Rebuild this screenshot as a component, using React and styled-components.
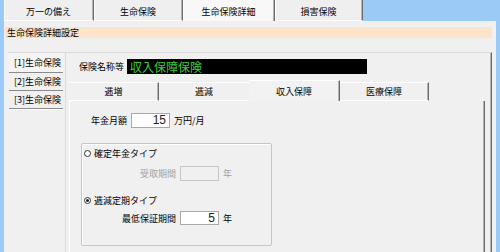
import React from 'react';
import styled, { createGlobalStyle } from 'styled-components';

const Global = createGlobalStyle`
  html, body { margin: 0; padding: 0; background: #9ccaf6; }
  body { font-family: "Noto Sans CJK JP", "Liberation Sans", sans-serif; }
`;

const Screen = styled.div`
  width: 500px;
  height: 252px;
  padding: 0 4px;
  box-sizing: border-box;
  display: flex;
  flex-direction: column;
  overflow: hidden;
  font-size: 9px;
  color: #000;
`;

const TopTabs = styled.div`
  display: flex;
  height: 21px;
  flex-shrink: 0;
`;

const TopTab = styled.div`
  width: ${(p) => p.$w}px;
  height: 21px;
  box-sizing: border-box;
  display: flex;
  align-items: center;
  justify-content: center;
  background: ${(p) => (p.$active ? '#f8f8f8' : '#efefef')};
  border-right: 1px solid #6a6a6a;
  box-shadow: inset 1px 0 0 #fff, inset -1px 0 0 #b4b4b4;
  border-bottom: ${(p) => (p.$active ? 'none' : '1px solid #fff')};
  padding-top: 2px;
`;

const Sheet = styled.div`
  flex: 1;
  background: #f0f0f0;
  display: flex;
  flex-direction: column;
`;

const SectionTitle = styled.div`
  margin: 6px 4px 0 1px;
  height: 11px;
  line-height: 11px;
  padding-left: 2px;
  background: #fde3ca;
`;

const Frame = styled.div`
  flex: 1;
  margin: 14px 4px 0 4px;
  border-top: 1px solid #dadada;
  border-right: 1px solid #6a6a6a;
  box-shadow: inset -1px 0 0 #b4b4b4;
  display: flex;
`;

const SideList = styled.div`
  width: 58px;
  padding: 0 2px 0 1px;
  box-sizing: border-box;
  border-right: 1px solid #dcdcdc;
  display: flex;
  flex-direction: column;
`;

const SideItem = styled.div`
  height: ${(p) => p.$h}px;
  box-sizing: border-box;
  display: flex;
  align-items: center;
  padding-left: 5px;
  border-bottom: 1px solid #8a8a8a;
  box-shadow: 0 1px 0 #fff;
  background: ${(p) => (p.$active ? '#f4f4f4' : '#f0f0f0')};
`;

const Content = styled.div`
  flex: 1;
  display: flex;
  flex-direction: column;
  padding: 6px 3px 0 3px;
`;

const NameRow = styled.div`
  display: flex;
  align-items: center;
  height: 15px;
  padding-left: 10px;
  gap: 3px;
`;

const NameBox = styled.div`
  width: 240px;
  height: 15px;
  background: #000;
  color: #3ccf3c;
  font-size: 12px;
  line-height: 15px;
  padding-left: 3px;
  box-sizing: border-box;
`;

const InnerTabs = styled.div`
  display: flex;
  align-items: flex-end;
  height: 21px;
  margin-top: 6px;
`;

const InnerTab = styled.div`
  width: ${(p) => p.$w}px;
  height: ${(p) => (p.$active ? 21 : 19)}px;
  box-sizing: border-box;
  display: flex;
  align-items: center;
  justify-content: center;
  background: ${(p) => (p.$active ? '#f2f2f2' : '#f0f0f0')};
  border-top: 1px solid #fff;
  border-right: ${(p) => (p.$edge ? '1px solid #6a6a6a' : 'none')};
  box-shadow: ${(p) => (p.$edge ? 'inset -1px 0 0 #b4b4b4' : 'none')};
  border-bottom: ${(p) => (p.$active ? 'none' : '1px solid #fff')};
`;

const InnerPanel = styled.div`
  flex: 1;
  margin-right: 3px;
  border-left: 1px solid #fff;
  border-right: 1px solid #6a6a6a;
  box-shadow: inset -1px 0 0 #b4b4b4;
  padding: 12px 0 0 11px;
`;

const FieldRow = styled.div`
  display: flex;
  align-items: center;
  gap: ${(p) => p.$gap || 4}px;
  margin-top: ${(p) => p.$mt || 0}px;
`;

const FieldLabel = styled.span`
  width: ${(p) => p.$w}px;
  text-align: right;
  color: ${(p) => (p.$disabled ? '#a2a2a2' : '#000')};
`;

const NumBox = styled.div`
  width: ${(p) => p.$w || 39}px;
  height: ${(p) => p.$h || 15}px;
  box-sizing: border-box;
  border: 1px solid ${(p) => (p.$disabled ? '#c6c6c6' : '#a8a8a8')};
  background: ${(p) => (p.$disabled ? '#f0f0f0' : '#fff')};
  font-family: "Liberation Sans", Arial, sans-serif;
  font-size: 12px;
  line-height: 13px;
  text-align: right;
  padding-right: 3px;
  color: #222;
`;

const Group = styled.div`
  width: 191px;
  height: 103px;
  box-sizing: border-box;
  margin-top: 15px;
  border: 1px solid #c6c6c6;
  border-radius: 2px;
  box-shadow: inset 1px 1px 0 #fff;
  padding: 4px 0 0 2px;
`;

const RadioRow = styled.div`
  display: flex;
  align-items: center;
  height: 11px;
  gap: 3px;
  margin-top: ${(p) => p.$mt || 0}px;
`;

const RadioMark = styled.span`
  width: 7px;
  height: 7px;
  box-sizing: border-box;
  border: 1px solid #333;
  border-radius: 50%;
  display: flex;
  align-items: center;
  justify-content: center;
  background: #fff;
  &::after {
    content: '';
    width: 3px;
    height: 3px;
    border-radius: 50%;
    background: ${(p) => (p.$on ? '#222' : 'transparent')};
  }
`;

const Unit = styled.span`
  color: ${(p) => (p.$disabled ? '#a2a2a2' : '#000')};
`;

export default function App() {
  return (
    <Screen>
      <Global />
      <TopTabs>
        <TopTab $w={90}>万一の備え</TopTab>
        <TopTab $w={89}>生命保険</TopTab>
        <TopTab $w={92} $active>生命保険詳細</TopTab>
        <TopTab $w={88}>損害保険</TopTab>
      </TopTabs>
      <Sheet>
        <SectionTitle>生命保険詳細設定</SectionTitle>
        <Frame>
          <SideList>
            <SideItem $h={20} $active>[1]生命保険</SideItem>
            <SideItem $h={18}>[2]生命保険</SideItem>
            <SideItem $h={18}>[3]生命保険</SideItem>
          </SideList>
          <Content>
            <NameRow>
              <span>保険名称等</span>
              <NameBox>収入保障保険</NameBox>
            </NameRow>
            <InnerTabs>
              <InnerTab $w={90} $edge>逓増</InnerTab>
              <InnerTab $w={90}>逓減</InnerTab>
              <InnerTab $w={91} $active $edge>収入保障</InnerTab>
              <InnerTab $w={89} $edge>医療保障</InnerTab>
            </InnerTabs>
            <InnerPanel>
              <FieldRow>
                <FieldLabel $w={46}>年金月額</FieldLabel>
                <NumBox>15</NumBox>
                <Unit>万円/月</Unit>
              </FieldRow>
              <Group>
                <RadioRow>
                  <RadioMark />
                  <span>確定年金タイプ</span>
                </RadioRow>
                <FieldRow $mt={7}>
                  <FieldLabel $w={92} $disabled>受取期間</FieldLabel>
                  <NumBox $disabled />
                  <Unit $disabled>年</Unit>
                </FieldRow>
                <RadioRow $mt={14}>
                  <RadioMark $on />
                  <span>逓減定期タイプ</span>
                </RadioRow>
                <FieldRow $mt={5}>
                  <FieldLabel $w={92}>最低保証期間</FieldLabel>
                  <NumBox $h={14}>5</NumBox>
                  <Unit>年</Unit>
                </FieldRow>
              </Group>
            </InnerPanel>
          </Content>
        </Frame>
      </Sheet>
    </Screen>
  );
}
